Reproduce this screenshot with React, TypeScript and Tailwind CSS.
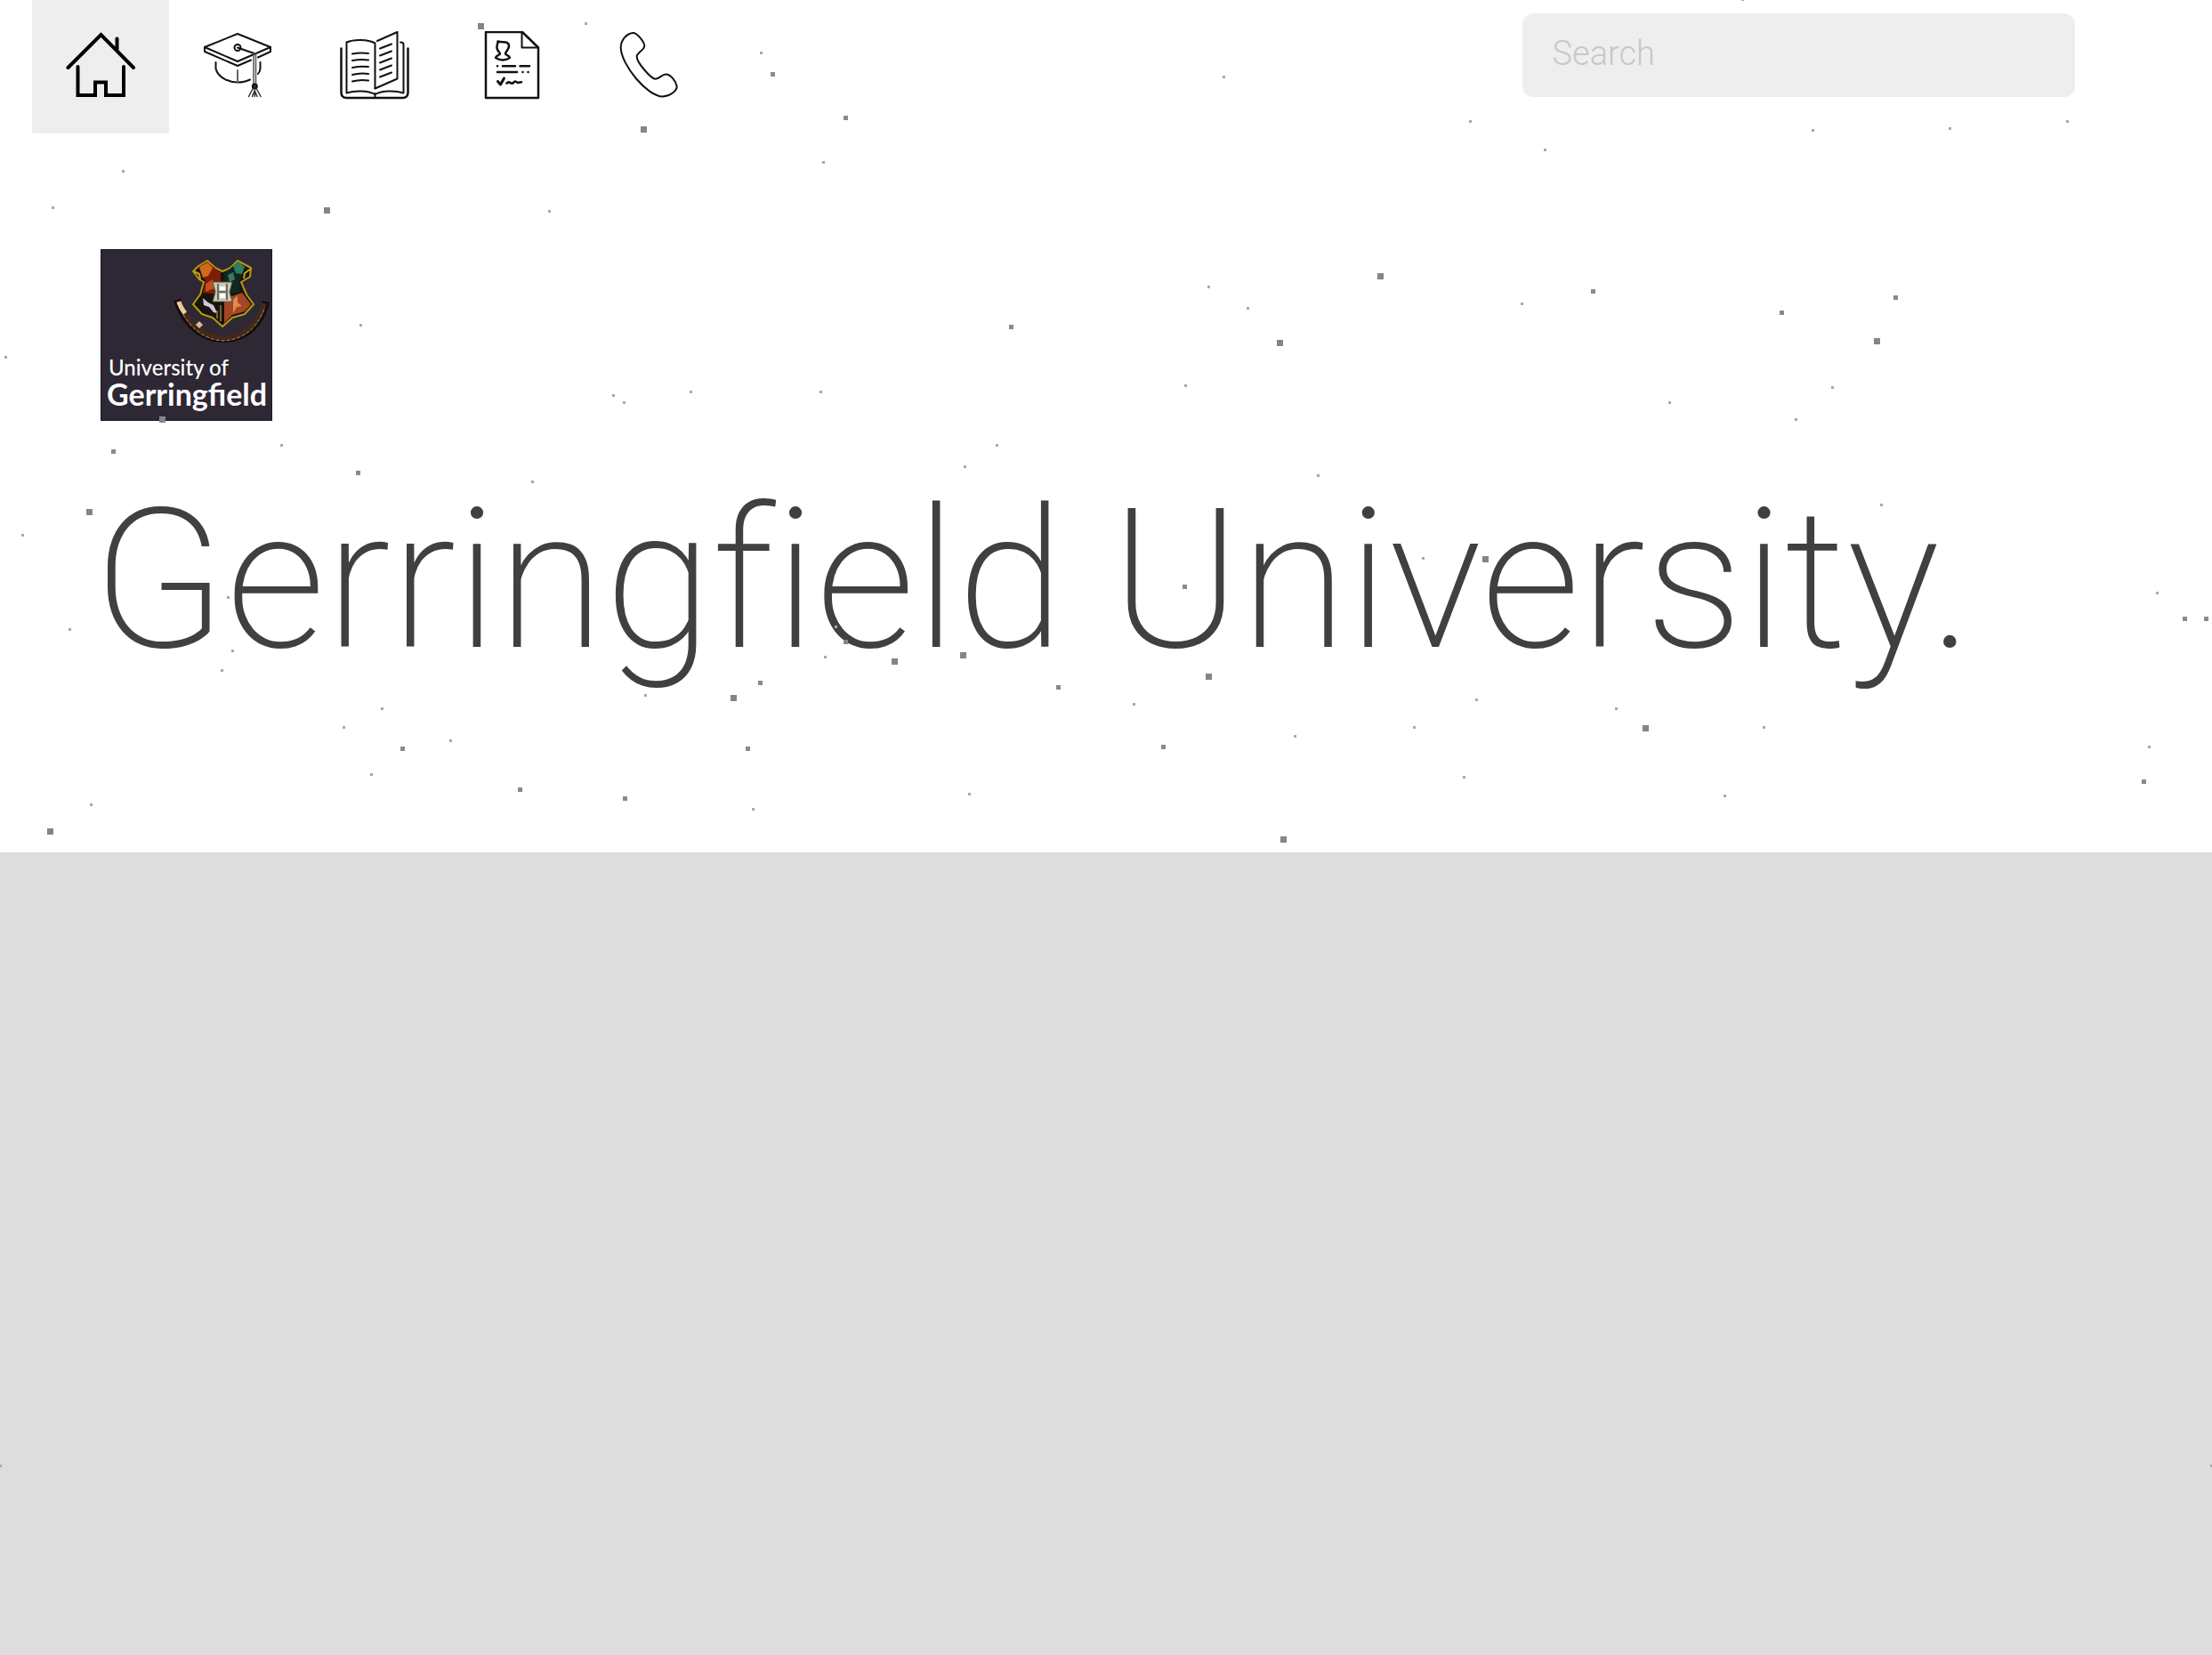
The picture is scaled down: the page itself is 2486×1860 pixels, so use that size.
import type { ReactNode } from "react";

type Speck = [x: number, y: number, size: 3 | 5 | 7];

const SPECKS: Speck[] = [
  [138, 192, 3], [59, 233, 3], [367, 236, 7], [405, 365, 3], [6, 401, 3], [182, 471, 7],
  [127, 507, 5], [316, 500, 3], [402, 531, 5], [100, 575, 7], [25, 601, 3], [78, 707, 3],
  [256, 671, 3], [261, 731, 3], [249, 753, 3], [429, 796, 3], [386, 817, 3], [452, 841, 5],
  [417, 870, 3], [102, 904, 3], [56, 934, 7],
  [540, 29, 7], [658, 26, 3], [855, 59, 3], [868, 83, 5], [950, 132, 5], [723, 145, 7],
  [925, 182, 3], [617, 237, 3], [689, 444, 3], [701, 452, 3], [776, 440, 3], [922, 440, 3],
  [598, 541, 3], [939, 704, 3], [950, 721, 5], [927, 738, 3],
  [854, 767, 5], [725, 781, 3], [824, 784, 7], [506, 832, 3], [840, 841, 5], [584, 887, 5],
  [702, 897, 5], [846, 909, 3],
  [1375, 86, 3], [1358, 322, 3], [1402, 346, 3], [1136, 367, 5], [1438, 385, 7], [1332, 433, 3],
  [1120, 500, 3], [1084, 524, 3], [1481, 534, 3], [1331, 659, 5], [1005, 743, 7], [1082, 736, 7],
  [1189, 772, 5], [1358, 760, 7], [1274, 791, 3], [1307, 839, 5], [1455, 827, 3], [1089, 892, 3],
  [1442, 943, 7],
  [1652, 136, 3], [1736, 168, 3], [1958, -1, 3], [1551, 310, 7], [1790, 327, 5], [1710, 341, 3],
  [1876, 452, 3], [1599, 627, 3], [1669, 628, 7], [1659, 786, 3], [1816, 796, 3], [1849, 818, 7],
  [1589, 817, 3], [1982, 817, 3], [1645, 873, 3], [1938, 894, 3],
  [2037, 146, 3], [2191, 144, 3], [2323, 136, 3], [2130, 334, 5], [2002, 351, 5], [2109, 383, 7],
  [2059, 435, 3], [2018, 471, 3], [2114, 567, 3], [2424, 666, 3], [2455, 695, 5], [2479, 695, 5],
  [2415, 839, 3], [2409, 878, 5], [0, 1647, 3], [2485, 1647, 3],
];

const SPECK_FILL = { 3: "#a8a8a8", 5: "#8a8a8a", 7: "#858585" };

function Specks() {
  return (
    <svg className="pointer-events-none absolute inset-0 size-full" aria-hidden="true">
      {SPECKS.map(([x, y, size]) => (
        <rect
          key={`${x}-${y}`}
          x={x - (size - 1) / 2}
          y={y - (size - 1) / 2}
          width={size}
          height={size}
          fill={SPECK_FILL[size]}
        />
      ))}
    </svg>
  );
}

function Icon({ children, weight = 2 }: { children: ReactNode; weight?: number }) {
  return (
    <svg
      viewBox="0 0 78 78"
      className="size-[78px]"
      fill="none"
      stroke="#111"
      strokeWidth={weight}
      strokeLinecap="round"
      strokeLinejoin="round"
      aria-hidden="true"
    >
      {children}
    </svg>
  );
}

function HomeIcon() {
  return (
    <Icon weight={4}>
      <g stroke="#000">
        <path d="M2.5 41 39.5 4 76 41" strokeLinejoin="miter" />
        <path d="M57.5 8.500v12" />
        <path d="M13.500 40v32H33V57.500h12V72h20V40" strokeLinejoin="miter" />
      </g>
    </Icon>
  );
}

function CapIcon() {
  return (
    <Icon>
      <path d="M39 3 76 18 39 34 2 18Z" />
      <path d="M2 18v5l37 16 15-6.500M62 29.500l14-6.500v-5" />
      <path d="M14.500 35v7c2 9 13 15.500 24.500 15.500 5 0 10-1 14-3M62 48c2-2.500 2.500-4 2.500-6v-7" />
      <path d="M39 44v13" stroke="#666" />
      <circle cx="39" cy="18.500" r="3.500" />
      <path d="M39 18.500 57.500 25" />
      <path d="M57 25v35M59.500 25v35" stroke="#555" strokeWidth="1.500" />
      <circle cx="58.300" cy="62" r="2.500" fill="#333" />
      <path d="M56 65l-4.500 8.500M58.300 65v8.500M60.500 65l4.500 8.500M55.500 73.500l2.500-6M61 73.500l-2.500-6" strokeWidth="1.500" stroke="#333" />
    </Icon>
  );
}

function BookIcon() {
  return (
    <Icon>
      <path d="M1.500 19.500V69q0 6 6 6h63q6 0 6-6V19.500" strokeWidth="2.500" />
      <path d="M39.500 64V13.500C31 9 16 9 7.500 12.500V69.500c9-3 24-3 32 1.500 8-4.500 23-4.500 32-1.500V14.500q0-2-3.500-2" />
      <path d="M39.500 70v5" />
      <path d="M42 11 64.500 1v52.500L39.500 64.500" />
      <path d="M14 25.500q9-1.500 18-.500M14 33q9-1.500 18-.500M14 41q9-2 18-1M14 49q9-2.500 18-1M14 56.500q9-2.500 18-1" />
      <path d="M45 19.500 58 14.500M45 27.500l13-5M45 35.500l13-5M45 43.500l13-5M45 51.500l13-5" />
    </Icon>
  );
}

function DocumentIcon() {
  return (
    <Icon>
      <path d="M10 1h41L69 18.500V75H10Z" strokeWidth="2.500" />
      <path d="M50.500 1v17.500H69" />
      <path d="M23.500 11.500c4 1.500 8 0 10.500 1.500 3 2 2 5 1 7s-3 4-3 5.500 4 1.500 5 4.500c-5 3-11 3-16 0 1-3 5-3 5-4.500s-3-3-3.500-6.500c-.5-3 1-4 1-7.500Z" strokeWidth="2.500" />
      <path d="M23 39.300h.100M29 39.300h14M48.500 39.300H59M23 46h22M51.500 46h.100M57.500 46h.100" strokeWidth="2.500" />
      <path d="M23.500 56.500 26.500 60 30.500 53" strokeWidth="3" />
      <path d="M33.500 58.500q2-2 4-.500t4-.500 4 .500l4.500-.800" strokeWidth="2.500" />
    </Icon>
  );
}

function PhoneIcon() {
  return (
    <Icon>
      <path d="M21 2C14 3 7.700 10 7.700 18.500 8 38 38 74 55 73.500 63 73 71 67 70.700 62 70 57 64 48.500 58.500 48.500 54 48.500 51 53.700 46.700 53.700 42 53.700 25 35 25.700 28 26.500 24 34.300 21 34.300 16.500 34 12 26 1.500 21 2Z" />
    </Icon>
  );
}

const NAV = [
  { label: "Home", icon: <HomeIcon /> },
  { label: "Courses", icon: <CapIcon /> },
  { label: "Library", icon: <BookIcon /> },
  { label: "Admissions", icon: <DocumentIcon /> },
  { label: "Contact", icon: <PhoneIcon /> },
];

function Crest() {
  return (
    <svg viewBox="80 6 110 100" className="ml-auto h-[100px] w-[110px]" aria-hidden="true">
      <path d="M84 56c8 26 27 44 52 44s42-16 48-42" fill="none" stroke="#120c10" strokeWidth="8" />
      <path d="M86 58c9 24 27 41 50 41s39-15 46-39" fill="none" stroke="#442a19" strokeWidth="6" />
      <path d="M88 67c10 20 26 34 48 35 22-1 38-14 46-36" fill="none" stroke="#a58a62" strokeWidth="1" strokeDasharray="4 2" />
      <path d="M86 58c1 5 4 9 7 13" fill="none" stroke="#f0c9a2" strokeWidth="5" />
      <path d="M107 86l4-4" stroke="#d9bd98" strokeWidth="6" />
      <path d="M135 24 127 20 118 12 108 18 102 24 109 33 114 36 110 50 102 61 112 72 124 76 135 86 146 76 160 72 170 61 162 50 156 36 166 30 167 20 152 12 144 20Z" fill="#17130c" stroke="#b59a10" strokeWidth="2" strokeLinejoin="round" />
      <path d="M133 25 118 14 108 19 116 35 113 48 133 50Z" fill="#7e1c0c" />
      <path d="M109 19l9-5 6 6-5 9-6 2Z" fill="#d06a1d" />
      <path d="M116 38l8-5 2 10-10 4Z" fill="#c4501a" />
      <path d="M137 26 152 14l8 6-6 15 1 12-18 2Z" fill="#10291f" />
      <path d="M147 18l6-5 7 6-3 8-7-1Z" fill="#2c8061" />
      <path d="M141 28l6-3 2 8-6 3Z" fill="#3b7960" />
      <path d="M112 52 133 51v31l-10-9-11-4-7-8Z" fill="#17150f" />
      <path d="M137 55l20-7 10 13-7 8-14 4-9 9Z" fill="#a34724" />
      <path d="M147 56l5-5v8l5 4-6 1-4 7v-8Z" fill="#e08a4b" />
      <path d="M113 54l6 5 6 3 4 9-4-1-5-6-6-2Z" fill="#d3c6df" />
      <path d="M133 62v18M129 68v9" stroke="#77662c" strokeWidth="2" />
      <path d="M124 36h22l-3 11 3 11h-22l3-11Z" fill="#c9c8b8" stroke="#55523f" strokeWidth="1" />
      <path d="M130 38v18M140 38v18M130 47h10" stroke="#6d6b5c" strokeWidth="2" />
      <path d="M132 41h6v4h-6ZM132 49h6v5h-6Z" fill="#fff" />
      <path d="M103 24l6 3 1 6M167 21l-7 5-1 6" fill="none" stroke="#c7a40b" strokeWidth="2" />
    </svg>
  );
}

export default function App() {
  return (
    <div className="relative flex min-h-screen flex-col overflow-hidden bg-[#dddddd] font-['Roboto',sans-serif]">
      <div className="bg-white pb-[196px]">
        <header className="flex items-start justify-between pr-[154px] pl-9">
          <nav className="flex" aria-label="Main">
            {NAV.map(({ label, icon }, index) => (
              <a
                key={label}
                href="#"
                aria-label={label}
                className={
                  index === 0
                    ? "flex h-[150px] w-[154px] justify-center bg-[#eeeeee] pt-[35px]"
                    : "flex h-[150px] w-[154px] justify-center pt-[35px]"
                }
              >
                {icon}
              </a>
            ))}
          </nav>
          <input
            type="search"
            placeholder="Search"
            aria-label="Search"
            className="mt-[15px] h-[94px] w-[25vw] rounded-xl bg-[#eeeeee] px-[34px] pb-1 text-[38px] font-light text-[#404040] outline-none placeholder:text-[#c8c8c8]"
          />
        </header>
        <main className="pt-[130px]">
          <div className="ml-[113px] flex size-[193px] flex-col border border-[#1c1725] bg-[#2e2835] pt-1.5 font-['Lato',sans-serif] text-white">
            <Crest />
            <div className="mt-3 pl-2 text-[24px] leading-7 font-medium whitespace-nowrap">University of</div>
            <div className="pl-1.5 text-[34px] leading-8 font-bold whitespace-nowrap">Gerringfield</div>
          </div>
          <h1 className="mt-[70px] pl-26 text-[219px] leading-none font-extralight whitespace-nowrap text-[#404040] [font-variant-ligatures:none]">
            Gerringfield University.
          </h1>
        </main>
      </div>
      <Specks />
    </div>
  );
}
